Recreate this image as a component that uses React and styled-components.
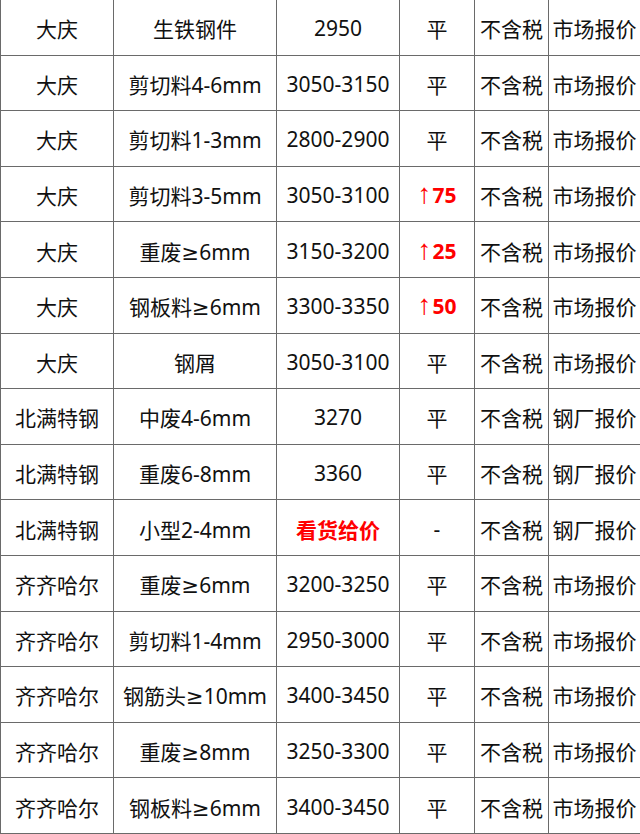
import React from 'react';
import styled, { createGlobalStyle } from 'styled-components';

const GlobalStyle = createGlobalStyle`
  html, body {
    margin: 0;
    padding: 0;
    background: #fff;
  }
`;

const Table = styled.div`
  display: grid;
  grid-template-columns: 112px 162px 122px 74px 73px 1fr;
  grid-template-rows: repeat(15, 1fr);
  gap: 1px;
  width: 640px;
  height: 834px;
  box-sizing: border-box;
  padding: 0 0 1px 1px;
  background: #6a6a6a;
  font-family: "Noto Sans", "DejaVu Sans", "Noto Sans CJK SC", sans-serif;
  font-size: 21px;
  color: #111;
`;

const Cell = styled.div`
  display: flex;
  align-items: center;
  justify-content: center;
  padding-top: 2px;
  background: #fff;
  white-space: nowrap;
  overflow: hidden;
  color: ${(p) => (p.$red ? '#f00' : 'inherit')};
  font-weight: ${(p) => (p.$red ? 700 : 400)};
`;

const Arrow = styled.span`
  font-family: "Liberation Sans", sans-serif;
  font-weight: 400;
  font-size: 28px;
  line-height: 1;
  margin-right: 1px;
  position: relative;
  top: -1px;
`;

const rows = [
  ['大庆', '生铁钢件', '2950', '平', '不含税', '市场报价'],
  ['大庆', '剪切料4-6mm', '3050-3150', '平', '不含税', '市场报价'],
  ['大庆', '剪切料1-3mm', '2800-2900', '平', '不含税', '市场报价'],
  ['大庆', '剪切料3-5mm', '3050-3100', '↑75', '不含税', '市场报价'],
  ['大庆', '重废≥6mm', '3150-3200', '↑25', '不含税', '市场报价'],
  ['大庆', '钢板料≥6mm', '3300-3350', '↑50', '不含税', '市场报价'],
  ['大庆', '钢屑', '3050-3100', '平', '不含税', '市场报价'],
  ['北满特钢', '中废4-6mm', '3270', '平', '不含税', '钢厂报价'],
  ['北满特钢', '重废6-8mm', '3360', '平', '不含税', '钢厂报价'],
  ['北满特钢', '小型2-4mm', '看货给价', '-', '不含税', '钢厂报价'],
  ['齐齐哈尔', '重废≥6mm', '3200-3250', '平', '不含税', '市场报价'],
  ['齐齐哈尔', '剪切料1-4mm', '2950-3000', '平', '不含税', '市场报价'],
  ['齐齐哈尔', '钢筋头≥10mm', '3400-3450', '平', '不含税', '市场报价'],
  ['齐齐哈尔', '重废≥8mm', '3250-3300', '平', '不含税', '市场报价'],
  ['齐齐哈尔', '钢板料≥6mm', '3400-3450', '平', '不含税', '市场报价'],
];

function renderValue(v) {
  if (v.startsWith('↑')) {
    return (
      <>
        <Arrow>↑</Arrow>
        {v.slice(1)}
      </>
    );
  }
  return v;
}

function isRed(v) {
  return v.startsWith('↑') || v === '看货给价';
}

export default function App() {
  return (
    <>
      <GlobalStyle />
      <Table>
        {rows.map((row, i) =>
          row.map((v, j) => (
            <Cell key={`${i}-${j}`} $red={isRed(v)}>
              {renderValue(v)}
            </Cell>
          ))
        )}
      </Table>
    </>
  );
}
